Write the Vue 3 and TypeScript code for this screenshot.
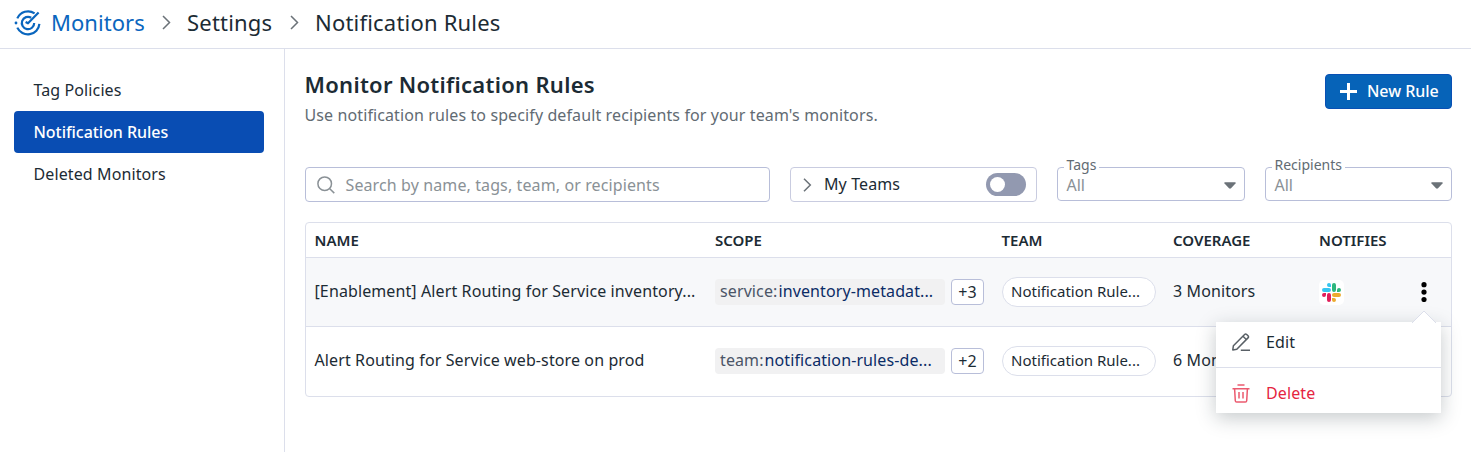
<script setup lang="ts">
interface NavItem { label: string; active: boolean }
interface Rule {
  name: string
  tagKey: string
  tagValue: string
  more: string
  team: string
  coverage: string
  active: boolean
}

const nav: NavItem[] = [
  { label: 'Tag Policies', active: false },
  { label: 'Notification Rules', active: true },
  { label: 'Deleted Monitors', active: false },
]

const filters: string[] = ['Tags', 'Recipients']
const columns: string[] = ['Name', 'Scope', 'Team', 'Coverage', 'Notifies', '']

const rules: Rule[] = [
  {
    name: '[Enablement] Alert Routing for Service inventory...',
    tagKey: 'service:',
    tagValue: 'inventory-metadat...',
    more: '+3',
    team: 'Notification Rule...',
    coverage: '3 Monitors',
    active: true,
  },
  {
    name: 'Alert Routing for Service web-store on prod',
    tagKey: 'team:',
    tagValue: 'notification-rules-de...',
    more: '+2',
    team: 'Notification Rule...',
    coverage: '6 Monitors',
    active: false,
  },
]
</script>

<template>
  <div class="page">
    <header class="crumbs">
      <svg class="logo" width="28" height="28" viewBox="0 0 28 28" fill="none" stroke="currentColor" stroke-width="2.2">
        <path d="M3.300 9.400A11.600 11.600 0 0 1 20.600 4.400" />
        <path d="M25.400 14.800A11.600 11.600 0 0 1 3.300 18.600" />
        <path d="M17.200 8.700A6.200 6.200 0 1 0 20.200 14" />
        <path d="M11.600 13L14 14.300L24.600 3.600" stroke-linejoin="round" />
        <circle cx="2" cy="14" r="1.400" fill="currentColor" stroke="none" />
      </svg>
      <a class="crumb link">Monitors</a>
      <svg class="chev" width="9" height="15" viewBox="0 0 9 15"><path d="M1 1l6.5 6.5L1 14" /></svg>
      <span class="crumb settings">Settings</span>
      <svg class="chev" width="9" height="15" viewBox="0 0 9 15"><path d="M1 1l6.5 6.5L1 14" /></svg>
      <span class="crumb">Notification Rules</span>
    </header>

    <div class="body">
      <nav class="side">
        <a v-for="item in nav" :key="item.label" class="nav-item" :class="{ active: item.active }">{{ item.label }}</a>
      </nav>

      <main class="main">
        <div class="heading">
          <div>
            <h1>Monitor Notification Rules</h1>
            <p>Use notification rules to specify default recipients for your team's monitors.</p>
          </div>
          <button class="new-rule">
            <svg width="17" height="17" viewBox="0 0 17 17"><path d="M8.500 0v17M0 8.500h17" stroke="currentColor" stroke-width="3" /></svg>
            <span>New Rule</span>
          </button>
        </div>

        <div class="filters">
          <div class="box search">
            <svg width="18" height="18" viewBox="0 0 18 18" fill="none" stroke="currentColor" stroke-width="1.500">
              <circle cx="7.700" cy="7.700" r="6.800" />
              <path d="M12.500 12.500l4.800 4.600" />
            </svg>
            <span>Search by name, tags, team, or recipients</span>
          </div>
          <div class="box teams">
            <svg class="chev" width="9" height="14" viewBox="0 0 9 14"><path d="M1 .8L7.300 7 1 13.200" /></svg>
            <span class="teams-label">My Teams</span>
            <span class="toggle"><i /></span>
          </div>
          <div v-for="filter in filters" :key="filter" class="box select">
            <span class="legend">{{ filter }}</span>
            <span class="value">All</span>
            <svg width="12" height="7" viewBox="0 0 12 7"><path d="M1 .2h10q1.200.2.500 1.300L7 6.300q-1 .9-2 0L.5 1.500Q-.2.4 1 .2z" fill="#6b7278" /></svg>
          </div>
        </div>

        <div class="table">
          <div class="row head">
            <span v-for="column in columns" :key="column">{{ column }}</span>
          </div>
          <div v-for="rule in rules" :key="rule.name" class="row" :class="{ active: rule.active }">
            <span class="text">{{ rule.name }}</span>
            <span class="scope">
              <span class="tag"><span class="key">{{ rule.tagKey }}</span><span class="val">{{ rule.tagValue }}</span></span>
              <span class="more">{{ rule.more }}</span>
            </span>
            <span><span class="pill">{{ rule.team }}</span></span>
            <span class="text">{{ rule.coverage }}</span>
            <span class="notifies">
              <span class="slack">
                <svg width="19" height="19" viewBox="0 0 24 24">
                  <path fill="#e01e5a" d="M5.042 15.165a2.528 2.528 0 0 1-2.520 2.523A2.528 2.528 0 0 1 0 15.165a2.527 2.527 0 0 1 2.522-2.520h2.520v2.520zM6.313 15.165a2.527 2.527 0 0 1 2.521-2.520 2.527 2.527 0 0 1 2.521 2.520v6.313A2.528 2.528 0 0 1 8.834 24a2.528 2.528 0 0 1-2.521-2.522v-6.313z" />
                  <path fill="#36c5f0" d="M8.834 5.042a2.528 2.528 0 0 1-2.521-2.520A2.528 2.528 0 0 1 8.834 0a2.528 2.528 0 0 1 2.521 2.522v2.520H8.834zM8.834 6.313a2.528 2.528 0 0 1 2.521 2.521 2.528 2.528 0 0 1-2.521 2.521H2.522A2.528 2.528 0 0 1 0 8.834a2.528 2.528 0 0 1 2.522-2.521h6.312z" />
                  <path fill="#2eb67d" d="M18.956 8.834a2.528 2.528 0 0 1 2.522-2.521A2.528 2.528 0 0 1 24 8.834a2.528 2.528 0 0 1-2.522 2.521h-2.522V8.834zM17.688 8.834a2.528 2.528 0 0 1-2.523 2.521 2.527 2.527 0 0 1-2.520-2.521V2.522A2.527 2.527 0 0 1 15.165 0a2.528 2.528 0 0 1 2.523 2.522v6.312z" />
                  <path fill="#ecaa2e" d="M15.165 18.956a2.528 2.528 0 0 1 2.523 2.522A2.528 2.528 0 0 1 15.165 24a2.527 2.527 0 0 1-2.520-2.522v-2.522h2.520zM15.165 17.688a2.527 2.527 0 0 1-2.520-2.523 2.526 2.526 0 0 1 2.520-2.520h6.313A2.527 2.527 0 0 1 24 15.165a2.528 2.528 0 0 1-2.522 2.523h-6.313z" />
                </svg>
              </span>
            </span>
            <span class="actions">
              <svg width="6" height="20" viewBox="0 0 6 20"><circle cx="3" cy="2.700" r="2.600" /><circle cx="3" cy="10.100" r="2.600" /><circle cx="3" cy="17.500" r="2.600" /></svg>
              <div v-if="rule.active" class="menu">
                <svg class="caret" width="24" height="13" viewBox="0 0 24 13"><path d="M0 13L12 1l12 12" fill="#fff" stroke="#dcdfeb" stroke-width="1" /></svg>
                <div class="menu-item">
                  <svg width="18" height="18" viewBox="0 0 18 18" fill="none" stroke="#596066" stroke-width="1.500" stroke-linejoin="round">
                    <path d="M.8 16.900l.6-4.200L12.600 1.500q1-1 2.100 0l1.300 1.300q1 1.100 0 2.100L4.800 16.200z" />
                    <path d="M11 3.200l3.300 3.300M8.800 17.200H18" />
                  </svg>
                  <span>Edit</span>
                </div>
                <div class="menu-item delete">
                  <svg width="18" height="19" viewBox="0 0 18 19" fill="none" stroke="currentColor" stroke-width="1.500">
                    <path d="M5.500 1.100h7M.5 4.700h17M2.600 4.700l.7 12q.1 1.200 1.300 1.200h8.800q1.200 0 1.300-1.200l.7-12M7 8v6.500M11 8v6.500" />
                  </svg>
                  <span>Delete</span>
                </div>
              </div>
            </span>
          </div>
        </div>
      </main>
    </div>
  </div>
</template>

<style>
body { background: #fff; }
</style>

<style scoped>
* { box-sizing: border-box; }
.page {
  height: 452px;
  overflow: hidden;
  display: flex;
  flex-direction: column;
  font: 16px/24px "Noto Sans", sans-serif;
  letter-spacing: 0.11px;
  color: #1c2b34;
  background: #fff;
}
svg { display: block; flex: none; }
.crumbs {
  flex: none;
  height: 49px;
  padding: 0 14px 3px;
  border-bottom: 1px solid #dcdfeb;
  display: flex;
  align-items: center;
  font-size: 22px;
  letter-spacing: 0.2px;
  white-space: nowrap;
}
.crumb { padding-bottom: 2px; }
.logo { color: #0a66be; margin-right: 9px; }
.link { color: #0a66be; width: 111px; letter-spacing: 0.05px; }
.settings { margin-left: 16px; width: 103px; }
.settings + .chev { margin-right: 16px; }
.chev { fill: none; stroke: #6b7278; stroke-width: 1.5; }
.body { flex: 1; display: flex; min-height: 0; }
.side { flex: none; width: 285px; border-right: 1px solid #dcdfeb; padding: 20px 20px 0 14px; }
.nav-item { display: flex; align-items: center; height: 42px; padding-left: 19.5px; border-radius: 4px; }
.nav-item.active { background: #094db3; color: #fff; font-weight: 500; letter-spacing: -0.05px; }
.main { flex: none; width: 1167px; padding: 20px 0 0 20px; }
.heading { display: flex; justify-content: space-between; height: 98px; }
h1 { margin: -1px 0 0 -0.5px; font-size: 22px; line-height: 32px; font-weight: 600; letter-spacing: 0.28px; }
p { margin: 3px 0 0 -0.5px; color: #626b73; }
.new-rule {
  margin: 5px 0 0;
  width: 127px;
  height: 35px;
  border: 1px solid #0950b4;
  border-radius: 4px;
  background: #0663b8;
  color: #fff;
  font: 500 16px/24px "Noto Sans", sans-serif;
  letter-spacing: -0.05px;
  display: flex;
  align-items: center;
  padding: 0 0 0 14px;
  gap: 10px;
  white-space: nowrap;
}
.new-rule span { padding-bottom: 2px; }
.filters { display: flex; gap: 20px; height: 35px; }
.box { position: relative; display: flex; align-items: center; border: 1px solid #b8bed9; border-radius: 4px; }
.search { width: 465px; padding-left: 11px; gap: 10.5px; color: #8a9196; }
.teams { width: 247px; padding: 0 10px 0 12px; border-color: #c9cce0; }
.teams .chev { margin-right: 12px; }
.teams-label { padding-bottom: 2px; }
.toggle { margin-left: auto; width: 40px; height: 23px; border-radius: 12px; background: #9299b0; padding: 4px; }
.toggle i { display: block; width: 15px; height: 15px; border-radius: 50%; background: #fff; }
.select { width: 188px; height: 34px; padding: 2px 8px 0 8.5px; justify-content: space-between; color: #8a9196; }
.select:last-child { width: 187px; }
.value { letter-spacing: 0; }
.legend { position: absolute; top: -13px; left: 5.5px; padding: 0 3px; background: #fff; font-size: 14px; line-height: 20px; letter-spacing: 0; color: #626b73; }
.table { margin-top: 20px; height: 175px; border: 1px solid #dcdfeb; border-radius: 4px; }
.row {
  display: grid;
  grid-template-columns: 400.5px 286.5px 171.5px 146px 94px 1fr;
  align-items: center;
  height: 69px;
  padding-left: 8.5px;
  white-space: nowrap;
}
.row + .row { border-top: 1px solid #dcdfeb; }
.row.active { background: #f7f8fa; }
.row.head { height: 34px; font-size: 15px; font-weight: 600; letter-spacing: 0; text-transform: uppercase; }
.text { padding-bottom: 2px; }
.scope { display: flex; gap: 6px; align-items: center; }
.tag { width: 230px; height: 26px; border-radius: 4px; background: #f1f1f2; padding-left: 5px; line-height: 25px; }
.key { color: #4b5567; }
.val { color: #0b2c66; margin-left: 1px; }
.more { width: 33px; height: 26px; border: 1px solid #b8bed9; border-radius: 4px; background: #fff; text-align: center; line-height: 24px; }
.pill { display: block; width: 154px; height: 30px; border: 1px solid #dcdfeb; border-radius: 15px; background: #fff; padding-left: 8.5px; font-size: 15px; line-height: 27px; letter-spacing: 0; }
.slack { display: flex; align-items: center; justify-content: center; width: 25px; height: 25px; border-radius: 5px; background: #fff; }
.actions { position: relative; }
.actions > svg { margin-left: 7.5px; fill: #000; }
.menu {
  position: absolute;
  z-index: 2;
  top: 40px;
  right: 10px;
  width: 225px;
  height: 91px;
  background: #fff;
  box-shadow: 0 5px 18px rgba(28, 43, 52, 0.25);
}
.caret { position: absolute; right: 5px; top: -12px; }
.menu-item { display: flex; align-items: center; gap: 16px; padding: 0 0 5px 16px; height: 45px; }
.menu-item.delete { height: 46px; padding: 5px 0 0 16px; border-top: 1px solid #dcdfeb; color: #e5243f; }
.menu-item.delete svg { opacity: 0.75; }
</style>
